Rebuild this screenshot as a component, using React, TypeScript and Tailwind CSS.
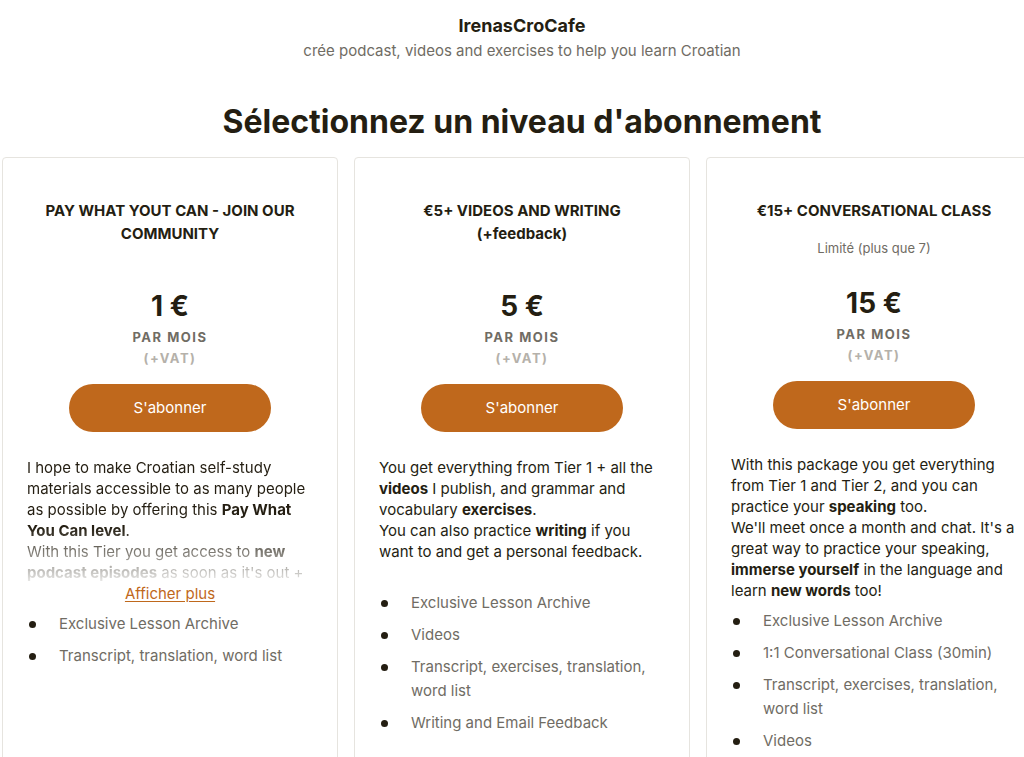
import { ReactNode } from "react";

type Tier = {
  title: ReactNode;
  limit?: string;
  price: string;
  description: ReactNode;
  collapsed?: boolean;
  benefits: string[];
};

const tiers: Tier[] = [
  {
    title: "PAY WHAT YOUT CAN - JOIN OUR COMMUNITY",
    price: "1 €",
    collapsed: true,
    description: (
      <>
        I hope to make Croatian self-study materials accessible to as many people as
        possible by offering this <b>Pay What You Can level</b>.
        <br />
        With this Tier you get access to <b>new podcast episodes</b> as soon as it's out +
        transcripts
      </>
    ),
    benefits: ["Exclusive Lesson Archive", "Transcript, translation, word list"],
  },
  {
    title: (
      <>
        €5+ VIDEOS AND WRITING
        <br />
        (+feedback)
      </>
    ),
    price: "5 €",
    description: (
      <>
        You get everything from Tier 1 + all the <b>videos</b> I publish, and grammar and
        vocabulary <b>exercises</b>.
        <br />
        You can also practice <b>writing</b> if you want to and get a personal feedback.
        <br />
        &nbsp;
      </>
    ),
    benefits: [
      "Exclusive Lesson Archive",
      "Videos",
      "Transcript, exercises, translation, word list",
      "Writing and Email Feedback",
    ],
  },
  {
    title: "€15+ CONVERSATIONAL CLASS",
    limit: "Limité (plus que 7)",
    price: "15 €",
    description: (
      <>
        With this package you get everything from Tier 1 and Tier 2, and you can practice
        your <b>speaking</b> too.
        <br />
        We'll meet once a month and chat. It's a great way to practice your speaking,{" "}
        <b>immerse yourself</b> in the language and learn <b>new words</b> too!
      </>
    ),
    benefits: [
      "Exclusive Lesson Archive",
      "1:1 Conversational Class (30min)",
      "Transcript, exercises, translation, word list",
      "Videos",
    ],
  },
];

function TierCard({ tier }: { tier: Tier }) {
  return (
    <div className="flex w-[336px] shrink-0 flex-col rounded-[4px] border border-[#e6e4df] bg-white px-6 pt-[41px] pb-10">
      <h3
        className={`text-center text-[15px] leading-[23px] font-bold text-[#241e12] ${
          tier.limit ? "mb-4" : "mb-[43px]"
        }`}
      >
        {tier.title}
      </h3>
      {tier.limit && (
        <p className="mb-[27px] text-center text-[13px] leading-5 text-[#706c64]">
          {tier.limit}
        </p>
      )}
      <div className="mb-[3px] text-center text-[28px] leading-9 font-bold text-[#241e12]">
        {tier.price}
      </div>
      <div className="text-center text-[13px] leading-[21px] font-bold tracking-[1.5px] text-[#706c64]">
        PAR MOIS
      </div>
      <div className="text-center text-[13px] leading-5 font-bold tracking-[1.5px] text-[#b5b1aa]">
        (+VAT)
      </div>
      <button className="mx-auto mt-4 h-12 w-[202px] rounded-full bg-[#bf681c] text-[15px] text-white">
        S'abonner
      </button>
      <div
        className={`mt-[25px] text-[15px] leading-[21px] text-[#241e12] ${
          tier.collapsed
            ? "h-[126px] overflow-hidden [mask-image:linear-gradient(to_bottom,black_56%,rgba(0,0,0,0.08)_100%)]"
            : ""
        }`}
      >
        {tier.description}
      </div>
      {tier.collapsed && (
        <a className="text-center text-[15px] leading-[21px] text-[#bf681c] underline underline-offset-2">
          Afficher plus
        </a>
      )}
      <ul className="mt-2 flex flex-col gap-2">
        {tier.benefits.map((b) => (
          <li key={b} className="flex text-[15px] leading-6 text-[#706c64]">
            <span className="flex h-6 w-8 shrink-0 items-center pl-[2px]">
              <span className="h-[7px] w-[7px] rounded-full bg-[#241e12]" />
            </span>
            <span>{b}</span>
          </li>
        ))}
      </ul>
    </div>
  );
}

export default function App() {
  return (
    <div className="min-h-screen overflow-hidden bg-white pl-[2px] font-['Inter','Noto_Sans',sans-serif]">
      <div className="w-[1040px]">
        <header className="pt-[14px] text-center">
          <h1 className="text-[18px] leading-6 font-bold text-[#241e12]">IrenasCroCafe</h1>
          <p className="mt-[1px] text-[15px] leading-6 text-[#706c64]">
            crée podcast, videos and exercises to help you learn Croatian
          </p>
        </header>
        <h2 className="mt-[39px] text-center text-[32px] leading-10 font-bold text-[#241e12]">
          Sélectionnez un niveau d'abonnement
        </h2>
        <div className="mt-[15px] flex gap-4">
          {tiers.map((t, i) => (
            <TierCard key={i} tier={t} />
          ))}
        </div>
      </div>
    </div>
  );
}
